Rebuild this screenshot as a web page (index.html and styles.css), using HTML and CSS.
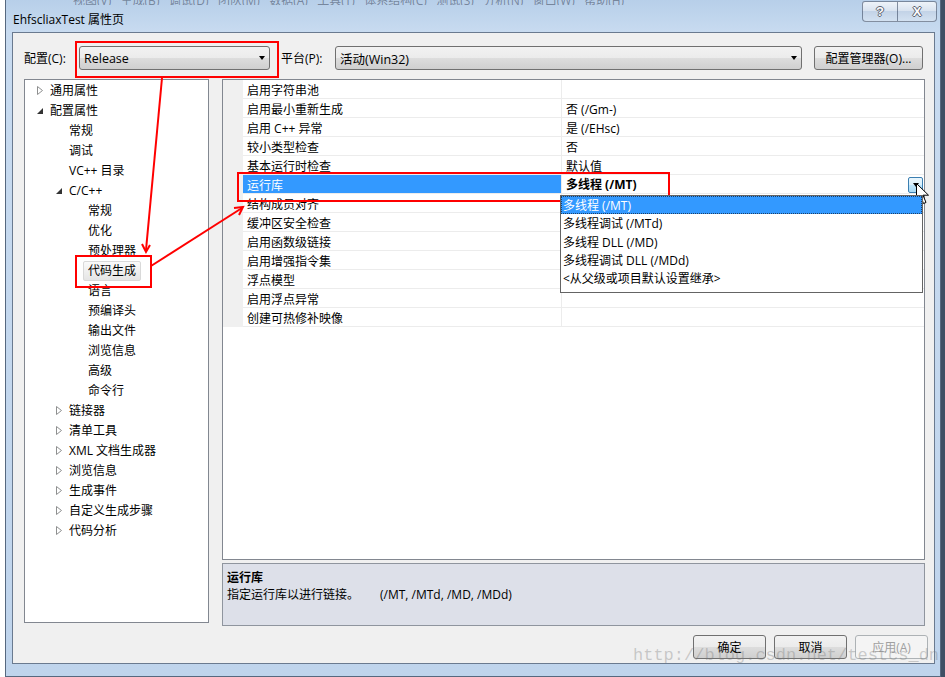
FILE: index.html
```html
<!DOCTYPE html>
<html lang="zh-CN">
<head>
    <meta charset="UTF-8">
    <title>EhfscliaxTest 属性页</title>
    <link rel="stylesheet" href="styles.css">
</head>
<body>
    <div class="window">
        <div class="titlebar">
            <div class="title-left">
                <div class="ghost-menu"><span>视图(V)&nbsp;&nbsp;&nbsp;生成(B)&nbsp;&nbsp;&nbsp;调试(D)&nbsp;&nbsp;&nbsp;团队(M)&nbsp;&nbsp;&nbsp;数据(A)&nbsp;&nbsp;&nbsp;工具(T)&nbsp;&nbsp;&nbsp;体系结构(C)&nbsp;&nbsp;&nbsp;测试(S)&nbsp;&nbsp;&nbsp;分析(N)&nbsp;&nbsp;&nbsp;窗口(W)&nbsp;&nbsp;&nbsp;帮助(H)</span></div>
                <div class="title">EhfscliaxTest 属性页</div>
            </div>
            <div class="caption">
                <span class="cap cap-help">?</span>
                <span class="cap cap-close">X</span>
            </div>
        </div>

        <div class="client">
            <div class="config-row">
                <span class="lbl lbl-c">配置(C):</span>
                <div class="combo combo-cfg"><span>Release</span><i class="tri"></i></div>
                <span class="lbl lbl-p">平台(P):</span>
                <div class="combo combo-plat"><span>活动(Win32)</span><i class="tri"></i></div>
                <button class="btn btn-mgr">配置管理器(O)...</button>
            </div>

            <div class="main">
                <div class="tree">
                    <ul>
                        <li class="lv0"><span class="tw"><svg width="6" height="9"><path d="M0.5 0.5 L5.5 4.5 L0.5 8.5 Z" fill="#fff" stroke="#8e8f8f"/></svg></span><span class="lbl">通用属性</span></li>
                        <li class="lv0"><span class="tw"><svg width="6" height="6"><path d="M6 0 L6 6 L0 6 Z" fill="#333"/></svg></span><span class="lbl">配置属性</span></li>
                        <li class="lv1"><span class="tw"></span><span class="lbl">常规</span></li>
                        <li class="lv1"><span class="tw"></span><span class="lbl">调试</span></li>
                        <li class="lv1"><span class="tw"></span><span class="lbl">VC++ 目录</span></li>
                        <li class="lv1"><span class="tw"><svg width="6" height="6"><path d="M6 0 L6 6 L0 6 Z" fill="#333"/></svg></span><span class="lbl">C/C++</span></li>
                        <li class="lv2"><span class="tw"></span><span class="lbl">常规</span></li>
                        <li class="lv2"><span class="tw"></span><span class="lbl">优化</span></li>
                        <li class="lv2"><span class="tw"></span><span class="lbl">预处理器</span></li>
                        <li class="lv2 sel"><span class="tw"></span><span class="lbl">代码生成</span></li>
                        <li class="lv2"><span class="tw"></span><span class="lbl">语言</span></li>
                        <li class="lv2"><span class="tw"></span><span class="lbl">预编译头</span></li>
                        <li class="lv2"><span class="tw"></span><span class="lbl">输出文件</span></li>
                        <li class="lv2"><span class="tw"></span><span class="lbl">浏览信息</span></li>
                        <li class="lv2"><span class="tw"></span><span class="lbl">高级</span></li>
                        <li class="lv2"><span class="tw"></span><span class="lbl">命令行</span></li>
                        <li class="lv1"><span class="tw"><svg width="6" height="9"><path d="M0.5 0.5 L5.5 4.5 L0.5 8.5 Z" fill="#fff" stroke="#8e8f8f"/></svg></span><span class="lbl">链接器</span></li>
                        <li class="lv1"><span class="tw"><svg width="6" height="9"><path d="M0.5 0.5 L5.5 4.5 L0.5 8.5 Z" fill="#fff" stroke="#8e8f8f"/></svg></span><span class="lbl">清单工具</span></li>
                        <li class="lv1"><span class="tw"><svg width="6" height="9"><path d="M0.5 0.5 L5.5 4.5 L0.5 8.5 Z" fill="#fff" stroke="#8e8f8f"/></svg></span><span class="lbl">XML 文档生成器</span></li>
                        <li class="lv1"><span class="tw"><svg width="6" height="9"><path d="M0.5 0.5 L5.5 4.5 L0.5 8.5 Z" fill="#fff" stroke="#8e8f8f"/></svg></span><span class="lbl">浏览信息</span></li>
                        <li class="lv1"><span class="tw"><svg width="6" height="9"><path d="M0.5 0.5 L5.5 4.5 L0.5 8.5 Z" fill="#fff" stroke="#8e8f8f"/></svg></span><span class="lbl">生成事件</span></li>
                        <li class="lv1"><span class="tw"><svg width="6" height="9"><path d="M0.5 0.5 L5.5 4.5 L0.5 8.5 Z" fill="#fff" stroke="#8e8f8f"/></svg></span><span class="lbl">自定义生成步骤</span></li>
                        <li class="lv1"><span class="tw"><svg width="6" height="9"><path d="M0.5 0.5 L5.5 4.5 L0.5 8.5 Z" fill="#fff" stroke="#8e8f8f"/></svg></span><span class="lbl">代码分析</span></li>
                    </ul>
                </div>

                <div class="right">
                    <div class="grid">
                        <div class="prow"><div class="gut"></div><div class="pn">启用字符串池</div><div class="pv"></div></div>
                        <div class="prow"><div class="gut"></div><div class="pn">启用最小重新生成</div><div class="pv">否 (/Gm-)</div></div>
                        <div class="prow"><div class="gut"></div><div class="pn">启用 C++ 异常</div><div class="pv">是 (/EHsc)</div></div>
                        <div class="prow"><div class="gut"></div><div class="pn">较小类型检查</div><div class="pv">否</div></div>
                        <div class="prow"><div class="gut"></div><div class="pn">基本运行时检查</div><div class="pv">默认值</div></div>
                        <div class="prow sel">
                            <div class="gut"></div>
                            <div class="pn">运行库</div>
                            <div class="pv edit">
                                <span>多线程 (/MT)</span>
                                <span class="ddbtn"><i class="tri"></i></span>
                                <ul class="droplist">
                                    <li class="hot">多线程 (/MT)</li>
                                    <li>多线程调试 (/MTd)</li>
                                    <li>多线程 DLL (/MD)</li>
                                    <li>多线程调试 DLL (/MDd)</li>
                                    <li>&lt;从父级或项目默认设置继承&gt;</li>
                                </ul>
                            </div>
                        </div>
                        <div class="prow"><div class="gut"></div><div class="pn">结构成员对齐</div><div class="pv"></div></div>
                        <div class="prow"><div class="gut"></div><div class="pn">缓冲区安全检查</div><div class="pv"></div></div>
                        <div class="prow"><div class="gut"></div><div class="pn">启用函数级链接</div><div class="pv"></div></div>
                        <div class="prow"><div class="gut"></div><div class="pn">启用增强指令集</div><div class="pv"></div></div>
                        <div class="prow"><div class="gut"></div><div class="pn">浮点模型</div><div class="pv"></div></div>
                        <div class="prow"><div class="gut"></div><div class="pn">启用浮点异常</div><div class="pv"></div></div>
                        <div class="prow"><div class="gut"></div><div class="pn">创建可热修补映像</div><div class="pv"></div></div>
                    </div>
                    <div class="desc">
                        <div class="desc-title">运行库</div>
                        <div class="desc-text"><span class="d1">指定运行库以进行链接。</span><span>(/MT, /MTd, /MD, /MDd)</span></div>
                    </div>
                </div>
            </div>

            <div class="buttons">
                <button class="btn">确定</button>
                <button class="btn">取消</button>
                <button class="btn disabled">应用(A)</button>
            </div>
        </div>
    </div>

    <!-- 标注 -->
    <svg class="marks" width="945" height="677">
        <g fill="none" stroke="#f00" stroke-width="2">
            <rect x="76" y="42" width="202" height="35"/>
            <rect x="76" y="256" width="75" height="31"/>
            <rect x="238" y="173" width="431" height="28"/>
            <path d="M162 78 L146 250"/>
            <path d="M142 244 L146 252 L150 245"/>
            <path d="M151 266 L242 208"/>
            <path d="M234 208 L243 207 L239 215"/>
        </g>
    </svg>
    <svg class="cursor" width="14" height="22" viewBox="0 0 14 22">
        <path d="M0.5 0.5 L0.5 17 L4.5 13 L7.5 20.5 L10 19.5 L7 12.2 L12.5 12.2 Z" fill="#fff" stroke="#000" stroke-width="1"/>
    </svg>
    <div class="watermark">http://blog.csdn.net/testcs_dn</div>
</body>
</html>
```

FILE: styles.css
```css
* {
    box-sizing: border-box;
}
html, body {
    margin: 0;
}
body {
    width: 945px;
    height: 677px;
    overflow: hidden;
    position: relative;
    background: linear-gradient(90deg, #ffffff 0 6px, #3f4f64 6px);
    font-family: "Open Sans", "Noto Sans CJK SC", sans-serif;
    font-size: 12px;
    color: #000;
}
ul {
    list-style: none;
    margin: 0;
    padding: 0;
}

/* window frame */
.window {
    margin-left: 5px;
    width: 936px;
    height: 677px;
    border: 1px solid #56687f;
    border-top: 0;
    background: linear-gradient(180deg, #b7cfe9 0, #c8dbf0 32px, #bfd4ec 100%);
    display: flex;
    flex-direction: column;
}
.titlebar {
    height: 32px;
    display: flex;
    padding: 0 3px 0 7px;
}
.title-left {
    flex: 1;
    overflow: hidden;
}
.ghost-menu {
    height: 5px;
    overflow: hidden;
    color: rgba(60, 70, 90, .55);
    white-space: nowrap;
    font-size: 12px;
}
.ghost-menu span {
    display: block;
    margin-top: -9px;
    padding-left: 60px;
}
.title {
    line-height: 20px;
    margin-top: 5px;
}
.caption {
    display: flex;
    height: 22px;
    padding-top: 1px;
}
.cap {
    display: flex;
    align-items: center;
    justify-content: center;
    height: 21px;
    border: 1px solid rgba(60, 75, 100, .6);
    background: linear-gradient(180deg, #eef3f9 0, #d7e2ef 50%, #c3d3e7 50%, #d3e1f1 100%);
    font-family: "Liberation Sans", sans-serif;
    font-weight: bold;
    font-size: 13px;
    color: #fbfbfb;
    text-shadow: -1px 0 #5b6270, 1px 0 #5b6270, 0 -1px #5b6270, 0 1px #5b6270;
}
.cap-help {
    width: 35px;
    border-radius: 3px 0 0 4px;
    border-right: 0;
}
.cap-close {
    width: 40px;
    border-radius: 0 3px 4px 0;
}

/* client */
.client {
    height: 632px;
    margin: 0 5px 0 6px;
    border: 1px solid #6a7a8f;
    background: #f0f0f0;
    padding: 13px 6px 0 11px;
    display: flex;
    flex-direction: column;
}
.config-row {
    display: flex;
    align-items: center;
    height: 24px;
}
.lbl-c {
    width: 55px;
}
.lbl-p {
    width: 54px;
    margin-left: 11px;
}
.combo {
    height: 24px;
    display: flex;
    align-items: center;
    padding-left: 4px;
    border: 1px solid #707070;
    border-radius: 3px;
    background: linear-gradient(180deg, #f2f2f2 0, #ebebeb 50%, #dddddd 50%, #cfcfcf 100%);
    font-size: 12.5px;
}
.combo-cfg {
    width: 191px;
}
.combo-plat {
    width: 467px;
}
.tri {
    display: block;
    width: 0;
    height: 0;
    border-left: 3.5px solid transparent;
    border-right: 3.5px solid transparent;
    border-top: 4px solid #000;
}
.combo .tri {
    margin-left: auto;
    margin-right: 4px;
}
.btn {
    height: 24px;
    width: 73px;
    padding: 0;
    border: 1px solid #707070;
    border-radius: 3px;
    background: linear-gradient(180deg, #f2f2f2 0, #ebebeb 50%, #dddddd 50%, #cfcfcf 100%);
    font-family: "Open Sans", "Noto Sans CJK SC", sans-serif;
    font-size: 12px;
    color: #000;
}
.btn-mgr {
    width: 109px;
    margin-left: 12px;
}
.btn.disabled {
    color: #a0a0a0;
    border-color: #adb2b5;
    background: #f4f4f4;
}

.main {
    display: flex;
    margin-top: 9px;
    margin-right: 3px;
    height: 547px;
}

/* tree */
.tree {
    width: 185px;
    height: 544px;
    background: #fff;
    border: 1px solid #828790;
}
.tree li {
    height: 20px;
    display: flex;
    align-items: center;
    line-height: 18px;
    padding-top: 1px;
    white-space: nowrap;
}
.tree .lv0 {
    padding-left: 12px;
}
.tree .lv1 {
    padding-left: 31px;
}
.tree .lv2 {
    padding-left: 50px;
}
.tw {
    width: 13px;
    display: flex;
    align-items: center;
}
.tw svg {
    display: block;
}
.tree .lbl {
    margin-left: -5px;
    padding: 0 4px;
    border: 1px solid transparent;
    border-radius: 2px;
}
.tree .sel .lbl {
    border-color: #d9d9d9;
    background: linear-gradient(180deg, #fafafa, #e5e5e5);
}

/* property grid */
.right {
    width: 703px;
    margin-left: 13px;
    display: flex;
    flex-direction: column;
}
.grid {
    height: 481px;
    background: #fff;
    border: 1px solid #828790;
}
.prow {
    display: flex;
    height: 19px;
    line-height: 18px;
}
.gut {
    width: 20px;
    background: #f0f0f0;
}
.pn {
    width: 319px;
    padding: 2px 0 0 4px;
    border-bottom: 1px solid #ececec;
    border-right: 1px solid #ececec;
}
.pv {
    flex: 1;
    padding: 2px 0 0 4px;
    border-bottom: 1px solid #ececec;
}
.prow.sel .pn {
    background: #3399ff;
    color: #fff;
}
.pv.edit {
    position: relative;
    display: flex;
    align-items: center;
    font-weight: bold;
}
.ddbtn {
    margin-left: auto;
    margin-right: 1px;
    width: 15px;
    height: 16px;
    display: flex;
    align-items: center;
    justify-content: center;
    border: 1px solid #3c7fb1;
    border-radius: 2px;
    background: linear-gradient(180deg, #eaf6fd 0, #d9f0fc 50%, #bee6fd 50%, #a7d9f5 100%);
}
.droplist {
    position: absolute;
    left: -2px;
    top: 20px;
    width: 363px;
    height: 98px;
    background: #fff;
    border: 1px solid #646464;
    font-weight: normal;
    z-index: 5;
}
.droplist li {
    height: 18.3px;
    line-height: 18px;
    padding: 1px 0 0 2px;
    white-space: nowrap;
}
.droplist li.hot {
    background: #3399ff;
    color: #fff;
    outline: 1px dotted #1c3f66;
    outline-offset: -1px;
}

/* description */
.desc {
    margin-top: 3px;
    height: 63px;
    background: #dde0e9;
    border: 1px solid #8f959e;
    padding: 6px 4px 0;
    line-height: 16px;
}
.desc-title {
    font-weight: bold;
}
.desc-text {
    padding-top: 1px;
}
.d1 {
    display: inline-block;
    width: 153px;
}

.buttons {
    display: flex;
    justify-content: flex-end;
    gap: 8px;
    margin-top: 9px;
}

/* overlays */
.marks {
    position: absolute;
    left: 0;
    top: 0;
    pointer-events: none;
}
.cursor {
    position: absolute;
    left: 916px;
    top: 183px;
}
.watermark {
    position: absolute;
    left: 633px;
    top: 646px;
    font-family: "Liberation Mono", monospace;
    font-size: 17px;
    line-height: 20px;
    color: rgba(120, 120, 120, .35);
    white-space: nowrap;
}
```
